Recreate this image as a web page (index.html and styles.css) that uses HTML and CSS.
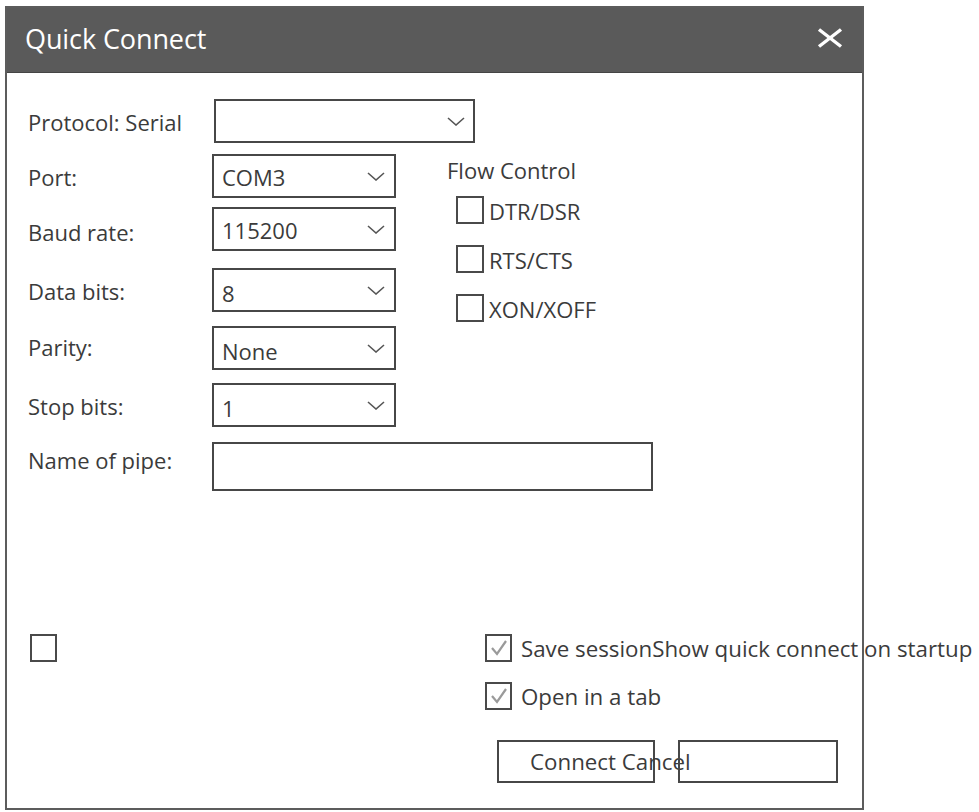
FILE: index.html
```html
<!DOCTYPE html>
<html lang="en">
<head>
<meta charset="utf-8">
<title>Quick Connect</title>
<link rel="stylesheet" href="styles.css">
</head>
<body>
<div class="dialog">
  <div class="titlebar">
    <span class="title">Quick Connect</span>
    <svg class="close" width="26" height="20" viewBox="0 0 26 20" aria-label="Close">
      <line x1="2" y1="1.5" x2="24" y2="18.5" />
      <line x1="24" y1="1.5" x2="2" y2="18.5" />
    </svg>
  </div>
  <div class="content">
    <div class="row row-protocol">
      <span class="label">Protocol: Serial</span>
      <div class="select select-wide">
        <span class="value"></span>
        <svg class="chevron" width="18" height="9" viewBox="0 0 18 9"><polyline points="1,1 9,8 17,1" /></svg>
      </div>
    </div>
    <div class="mid">
      <div class="fields">
        <div class="row row-port">
          <span class="label">Port:</span>
          <div class="select">
            <span class="value">COM3</span>
            <svg class="chevron" width="18" height="9" viewBox="0 0 18 9"><polyline points="1,1 9,8 17,1" /></svg>
          </div>
        </div>
        <div class="row row-baud">
          <span class="label label-low">Baud rate:</span>
          <div class="select">
            <span class="value">115200</span>
            <svg class="chevron" width="18" height="9" viewBox="0 0 18 9"><polyline points="1,1 9,8 17,1" /></svg>
          </div>
        </div>
        <div class="row row-data">
          <span class="label">Data bits:</span>
          <div class="select select-low">
            <span class="value">8</span>
            <svg class="chevron" width="18" height="9" viewBox="0 0 18 9"><polyline points="1,1 9,8 17,1" /></svg>
          </div>
        </div>
        <div class="row row-parity">
          <span class="label label-high">Parity:</span>
          <div class="select select-low">
            <span class="value">None</span>
            <svg class="chevron" width="18" height="9" viewBox="0 0 18 9"><polyline points="1,1 9,8 17,1" /></svg>
          </div>
        </div>
        <div class="row row-stop">
          <span class="label">Stop bits:</span>
          <div class="select select-low">
            <span class="value">1</span>
            <svg class="chevron" width="18" height="9" viewBox="0 0 18 9"><polyline points="1,1 9,8 17,1" /></svg>
          </div>
        </div>
      </div>
      <div class="flow">
        <div class="flow-title">Flow Control</div>
        <div class="flow-list">
          <div class="check"><span class="box"></span><span class="check-text">DTR/DSR</span></div>
          <div class="check"><span class="box"></span><span class="check-text">RTS/CTS</span></div>
          <div class="check"><span class="box"></span><span class="check-text">XON/XOFF</span></div>
        </div>
      </div>
    </div>
    <div class="row row-pipe">
      <span class="label label-top">Name of pipe:</span>
      <div class="textbox"></div>
    </div>
    <div class="bottom">
      <span class="box box-lone"></span>
      <div class="options">
        <div class="check check-wide">
          <span class="box box-checked">
            <svg width="23" height="24" viewBox="0 0 23 24"><polyline points="5,12 10,18 19,5" /></svg>
          </span>
          <span class="check-text">Save sessionShow quick connect on startup</span>
        </div>
        <div class="check check-wide check-second">
          <span class="box box-checked">
            <svg width="23" height="24" viewBox="0 0 23 24"><polyline points="5,12 10,18 19,5" /></svg>
          </span>
          <span class="check-text">Open in a tab</span>
        </div>
        <div class="buttons">
          <div class="button button-connect">Connect Cancel</div>
          <div class="button button-cancel"></div>
        </div>
      </div>
    </div>
  </div>
</div>
</body>
</html>
```
FILE: styles.css
```css
html, body {
  margin: 0;
  padding: 0;
  background: #ffffff;
  overflow: hidden;
}

body {
  font-family: "Open Sans", "Liberation Sans", sans-serif;
  font-size: 22px;
  line-height: 30px;
  color: #3b3b3b;
  width: 979px;
  height: 812px;
}

.dialog {
  margin: 6px 0 0 5px;
  width: 855px;
  height: 800px;
  border: 2px solid #5c5c5c;
  display: flex;
  flex-direction: column;
  background: #ffffff;
}

.titlebar {
  height: 65px;
  background: #5a5a5a;
  border-bottom: 1px solid #444444;
  display: flex;
  align-items: flex-start;
  justify-content: space-between;
  padding: 13px 19px 0 18px;
  box-sizing: border-box;
  flex: none;
}

.title {
  font-size: 27px;
  line-height: 36px;
  color: #ffffff;
  letter-spacing: -0.1px;
}

.close {
  margin-top: 7px;
  stroke: #ffffff;
  stroke-width: 3.4;
  stroke-linecap: butt;
}

.content {
  flex: 1;
  display: flex;
  flex-direction: column;
  padding: 26px 0 25px 21px;
  min-height: 0;
}

.row {
  display: flex;
  align-items: center;
}

.label {
  width: 184px;
  flex: none;
  white-space: nowrap;
  padding-top: 2px;
}

.label-low {
  padding-top: 6px;
}

.label-high {
  padding-top: 0;
  padding-bottom: 2px;
}

.label-top {
  align-self: flex-start;
  padding-top: 3px;
}

.select {
  width: 184px;
  height: 44px;
  box-sizing: border-box;
  border: 2px solid #474747;
  display: flex;
  align-items: center;
  justify-content: space-between;
  padding: 0 9px 0 8px;
}

.select-wide {
  width: 261px;
  margin-left: 2px;
  padding-right: 8px;
}

.select .value {
  padding-top: 1px;
}

.select-low .value {
  padding-top: 6px;
}

.value {
  white-space: nowrap;
}

.chevron {
  flex: none;
  fill: none;
  stroke: #555555;
  stroke-width: 1.6;
}

.row-port {
  margin-top: 11px;
}

.row-baud {
  margin-top: 9px;
}

.row-data {
  margin-top: 17px;
}

.row-parity {
  margin-top: 14px;
}

.row-stop {
  margin-top: 13px;
}

.row-pipe {
  margin-top: 15px;
}

.mid {
  display: flex;
  align-items: flex-start;
}

.fields {
  display: flex;
  flex-direction: column;
}

.flow {
  margin-left: 51px;
  margin-top: 12px;
}

.flow-list {
  display: flex;
  flex-direction: column;
  gap: 21px;
  margin-top: 11px;
  padding-left: 9px;
}

.check {
  display: flex;
  align-items: center;
  gap: 5px;
  height: 28px;
  white-space: nowrap;
}

.check-text {
  padding-top: 1px;
}

.box {
  width: 28px;
  height: 28px;
  box-sizing: border-box;
  border: 2px solid #4a4a4a;
  flex: none;
  display: flex;
}

.box svg {
  fill: none;
  stroke: #9a9a9a;
  stroke-width: 2.2;
}

.textbox {
  width: 441px;
  height: 49px;
  box-sizing: border-box;
  border: 2px solid #474747;
}

.bottom {
  margin-top: auto;
  display: flex;
  align-items: flex-start;
}

.box-lone {
  width: 27px;
  margin-left: 2px;
}

.options {
  margin-left: 428px;
  display: flex;
  flex-direction: column;
}

.check-wide {
  gap: 9px;
}

.check-wide .box {
  width: 27px;
}

.check-wide .check-text {
  font-size: 22.3px;
  padding-top: 2px;
}

.check-second {
  margin-top: 20px;
}

.buttons {
  display: flex;
  gap: 23px;
  margin-top: 30px;
  margin-left: 12px;
}

.button {
  height: 43px;
  box-sizing: border-box;
  border: 2px solid #474747;
  display: flex;
  align-items: center;
  white-space: nowrap;
  background: transparent;
  font-size: 22.3px;
}

.button-connect {
  width: 158px;
  padding-left: 31px;
}

.button-cancel {
  width: 160px;
}
```
